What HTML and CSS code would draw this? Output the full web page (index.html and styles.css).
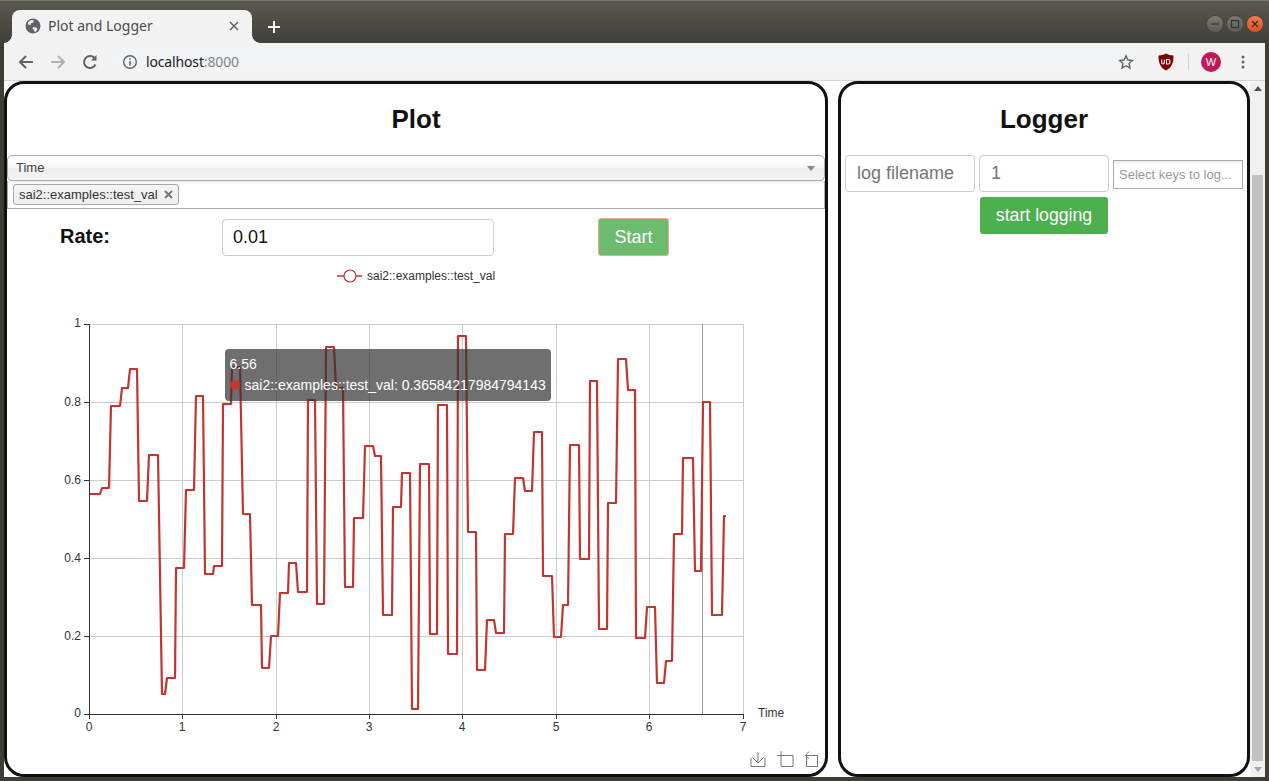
FILE: index.html
```html
<!DOCTYPE html>
<html lang="en">
<head>
    <meta charset="UTF-8">
    <title>Plot and Logger</title>
    <link rel="stylesheet" href="styles.css">
</head>
<body>
<div class="browser">
    <!-- Title bar -->
    <div class="titlebar">
        <div class="tab">
            <svg class="favicon" width="16" height="16" viewBox="0 0 16 16">
                <circle cx="8" cy="8" r="7.5" fill="#5f6368"/>
                <path d="M3 4.5l3-2.5 3 .5-1 2-2 .5-.5 2-2.5-.5zM8 9l3.5.5 1 2-2.5 3-1-2.5-1.500-1z" fill="#f2f2f2"/>
            </svg>
            <span class="tab-title">Plot and Logger</span>
            <svg class="tab-close" width="10" height="10" viewBox="0 0 10 10">
                <path d="M1 1l8 8M9 1l-8 8" stroke="#5f6368" stroke-width="1.500"/>
            </svg>
        </div>
        <svg class="new-tab" width="12" height="12" viewBox="0 0 12 12">
            <path d="M6 0v12M0 6h12" stroke="#f1f1f1" stroke-width="2"/>
        </svg>
        <div class="win-controls">
            <span class="win-btn"><svg width="10" height="10" viewBox="0 0 10 10"><path d="M1 5h8" stroke="#35342f" stroke-width="1.200"/></svg></span>
            <span class="win-btn"><svg width="10" height="10" viewBox="0 0 10 10"><rect x="1.500" y="1.500" width="7" height="7" fill="none" stroke="#35342f" stroke-width="1.200"/></svg></span>
            <span class="win-btn win-close"><svg width="10" height="10" viewBox="0 0 10 10"><path d="M2 2l6 6M8 2l-6 6" stroke="#3c2a20" stroke-width="1.200"/></svg></span>
        </div>
    </div>

    <!-- Toolbar -->
    <div class="toolbar">
        <svg class="tool" width="16" height="16" viewBox="0 0 16 16">
            <path d="M15 8H2M8 2L2 8l6 6" fill="none" stroke="#5f6368" stroke-width="2"/>
        </svg>
        <svg class="tool" width="16" height="16" viewBox="0 0 16 16">
            <path d="M1 8h13M8 2l6 6-6 6" fill="none" stroke="#b0b2b4" stroke-width="2"/>
        </svg>
        <svg class="tool" width="16" height="16" viewBox="0 0 16 16">
            <path d="M13.500 10.500A6 6 0 1 1 12.300 3.800" fill="none" stroke="#5f6368" stroke-width="2"/>
            <path d="M14.500 1v5.500H9z" fill="#5f6368"/>
        </svg>
        <div class="omnibox">
            <svg width="16" height="16" viewBox="0 0 16 16">
                <circle cx="8" cy="8" r="6.300" fill="none" stroke="#5f6368" stroke-width="1.400"/>
                <path d="M8 7v4.500M8 4.200v1.500" stroke="#5f6368" stroke-width="1.500"/>
            </svg>
            <span class="url">localhost<span class="url-port">:8000</span></span>
            <svg class="star" width="16" height="16" viewBox="0 0 16 16">
                <path d="M8 1.800l1.900 4.200 4.500.5-3.400 3 1 4.500L8 11.700 4 14l1-4.500-3.400-3 4.500-.5z" fill="none" stroke="#5f6368" stroke-width="1.400"/>
            </svg>
        </div>
        <svg class="ublock" width="16" height="18" viewBox="0 0 16 18">
            <path d="M8 .5c2 1.300 4.500 2 7.500 2 0 7-1.500 12-7.500 15C2 14.500.5 9.500.5 2.500c3 0 5.500-.7 7.500-2z" fill="#800000"/>
            <path d="M3.700 6.500v3.200c0 1.500 2.600 1.500 2.600 0V6.500M8.500 6.500v4.500h1.800c2.200 0 2.200-4.500 0-4.500z" fill="none" stroke="#f2f2f2" stroke-width="1.100"/>
        </svg>
        <span class="tool-sep"></span>
        <span class="avatar">W</span>
        <svg class="menu" width="4" height="14" viewBox="0 0 4 14">
            <circle cx="2" cy="2" r="1.500" fill="#5f6368"/>
            <circle cx="2" cy="7" r="1.500" fill="#5f6368"/>
            <circle cx="2" cy="12" r="1.500" fill="#5f6368"/>
        </svg>
    </div>

    <div class="viewport">
        <div class="panels">
            <!-- Plot -->
            <div class="panel plot-panel">
                <h1>Plot</h1>
                <div class="chosen-single">
                    <span>Time</span>
                    <i class="chosen-arrow"></i>
                </div>
                <div class="chosen-multi">
                    <span class="chosen-tag">sai2::examples::test_val
                        <svg width="9" height="9" viewBox="0 0 9 9"><path d="M1 1l7 7M8 1L1 8" stroke="#777" stroke-width="2"/></svg>
                    </span>
                </div>
                <div class="rate-row">
                    <label class="rate-label">Rate:</label>
                    <input class="text-input" type="text" value="0.01">
                    <button class="start-btn">Start</button>
                </div>
                <div class="chart">
                    <svg width="818" height="513" viewBox="7 260 818 513">
                        <!-- legend -->
                        <path d="M337 276h25" stroke="#c23531" stroke-width="1.500"/>
                        <circle cx="350" cy="276" r="6" fill="#fff" stroke="#c23531" stroke-width="1.200"/>
                        <text class="chart-text" x="367" y="280">sai2::examples::test_val</text>

                        <!-- grid -->
                        <path class="grid" d="M89.500 324.500H743.500M89.500 402.500H743.500M89.500 480.500H743.500M89.500 558.500H743.500M89.500 636.500H743.500"/>
                        <path class="grid" d="M182.500 324V714M276.500 324V714M369.500 324V714M462.500 324V714M556.500 324V714M649.500 324V714M743.500 324V714"/>
                        <path class="pointer" d="M702.500 324V714"/>

                        <!-- axes -->
                        <path class="axis" d="M89.500 324V714.500H743.500"/>
                        <path class="axis" d="M84 324.500h5M84 402.500h5M84 480.500h5M84 558.500h5M84 636.500h5M84 714.500h5"/>
                        <path class="axis" d="M89.500 714v5M182.500 714v5M276.500 714v5M369.500 714v5M462.500 714v5M556.500 714v5M649.500 714v5M743.500 714v5"/>

                        <g class="chart-text" text-anchor="end">
                            <text x="81" y="327">1</text>
                            <text x="81" y="406">0.8</text>
                            <text x="81" y="484">0.6</text>
                            <text x="81" y="562">0.4</text>
                            <text x="81" y="640">0.2</text>
                            <text x="81" y="717">0</text>
                        </g>
                        <g class="chart-text" text-anchor="middle">
                            <text x="89" y="731">0</text>
                            <text x="182" y="731">1</text>
                            <text x="276" y="731">2</text>
                            <text x="369" y="731">3</text>
                            <text x="462" y="731">4</text>
                            <text x="556" y="731">5</text>
                            <text x="649" y="731">6</text>
                            <text x="743" y="731">7</text>
                        </g>
                        <text class="chart-text" x="758" y="717">Time</text>

                        <!-- test_val series -->
                        <polyline class="series" points="90,494 100,494 102,488 109,488 111,406 120,406 122,388 128,388 130,369 137,369 139,501 147,501 149,455 158,455 162,694 165,694 167,678 175,678 176,568 184,568 186,490 194,490 196,396 203,396 205,574 213,574 214,566 222,566 223,404 231,404 232,367 240,367 243,514 250,514 252,605 261,605 262,668 269,668 271,636 278,636 280,593 288,593 289,563 296,563 298,592 307,592 308,400 315,400 317,604 324,604 326,347 334,347 336,388 343,388 345,587 353,587 354,518 363,518 365,446 373,446 375,456 381,456 383,615 392,615 393,507 401,507 402,473 410,473 412,709 418,709 420,464 429,464 430,634 437,634 438,405 447,405 448,654 457,654 458,336 466,336 468,532 476,532 477,670 485,670 487,620 494,620 496,633 504,633 505,534 513,534 515,478 523,478 525,491 532,491 534,432 542,432 543,576 552,576 554,637 561,637 563,605 568,605 570,445 579,445 580,559 589,559 590,381 597,381 599,629 607,629 608,503 616,503 618,359 626,359 628,390 635,390 636,638 645,638 647,607 655,607 657,683 664,683 666,661 672,661 674,534 682,534 683,458 693,458 695,571 701,571 703,402 710,402 712,615 722,615 724,516 726,516"/>

                        <!-- toolbox -->
                        <g class="toolbox">
                            <path d="M758 752v11M752.500 757.500l5.500 5.500 5.500-5.500M751 758v8.500h14V758"/>
                            <path d="M777 755.500h16v11h-12V751"/>
                            <path d="M806.500 757v9.500h11v-11h-12M809 751.500l-3.500 4 3.500 3"/>
                        </g>
                    </svg>
                    <div class="chart-tooltip">
                        <div>6.56</div>
                        <div><span class="tooltip-dot"></span>sai2::examples::test_val: 0.36584217984794143</div>
                    </div>
                </div>
            </div>

            <!-- Logger -->
            <div class="panel logger-panel">
                <h1>Logger</h1>
                <div class="logger-row">
                    <input class="text-input" type="text" placeholder="log filename">
                    <input class="text-input logger-num" type="text" value="1">
                    <input class="keys-input" type="text" placeholder="Select keys to log...">
                </div>
                <button class="log-btn">start logging</button>
            </div>
        </div>

        <!-- Scrollbar -->
        <div class="scrollbar">
            <i class="arrow-up"></i>
            <div class="thumb"></div>
            <i class="arrow-down"></i>
        </div>
    </div>
</div>
</body>
</html>
```

FILE: styles.css
```css
/* General */
* {
    box-sizing: border-box;
}

body {
    margin: 0;
    overflow: hidden;
    font-family: "Liberation Sans", Arial, sans-serif;
}

.browser {
    display: flex;
    flex-direction: column;
    height: 100vh;
    padding: 0 4px 4px;
    background-color: #3e3d38;
}

/* Title bar */
.titlebar {
    display: flex;
    align-items: flex-end;
    flex-shrink: 0;
    height: 43px;
    margin: 0 -4px;
    padding-left: 12px;
    border-top: 1px solid #77756f;
    background: linear-gradient(#5a5850, #403e39);
}

.tab {
    position: relative;
    display: flex;
    align-items: center;
    width: 240px;
    height: 33px;
    padding: 0 13px 1px;
    border-radius: 8px 8px 0 0;
    background-color: #f2f2f2;
}

.tab::before,
.tab::after {
    content: "";
    position: absolute;
    bottom: 0;
    width: 8px;
    height: 8px;
}

.tab::before {
    left: -8px;
    background: radial-gradient(circle at 0 0, transparent 7.5px, #f2f2f2 8px);
}

.tab::after {
    right: -8px;
    background: radial-gradient(circle at 100% 0, transparent 7.5px, #f2f2f2 8px);
}

.favicon {
    flex-shrink: 0;
}

.tab-title {
    flex: 1;
    margin: -2px 0 0 7px;
    font-family: "Noto Sans", sans-serif;
    font-size: 14px;
    color: #4a4c50;
}

.new-tab {
    margin: 0 0 10px 16px;
}

.win-controls {
    display: flex;
    gap: 4px;
    margin: 0 6px 11px auto;
}

.win-btn {
    display: flex;
    align-items: center;
    justify-content: center;
    width: 16px;
    height: 16px;
    border-radius: 50%;
    background: linear-gradient(#7a7972, #5c5b55);
    box-shadow: 0 0 0 1px #45443f;
}

.win-close {
    background: linear-gradient(#f08050, #dc4f1e);
}

/* Toolbar */
.toolbar {
    display: flex;
    align-items: center;
    flex-shrink: 0;
    height: 38px;
    padding-left: 14px;
    border-bottom: 1px solid #d5d5d5;
    background-color: #f2f2f2;
}

.tool {
    margin-right: 16px;
}

.omnibox {
    display: flex;
    align-items: center;
    width: 1031px;
    height: 30px;
    margin-left: -2px;
    padding: 0 9px 0 10px;
    border-radius: 15px;
    background-color: #f1f3f4;
}

.url {
    margin-left: 8px;
    font-family: "Noto Sans", sans-serif;
    font-size: 14px;
    letter-spacing: -0.15px;
    color: #202124;
}

.url-port {
    color: #80868b;
}

.star {
    margin-left: auto;
}

.ublock {
    margin-left: 15px;
}

.tool-sep {
    width: 1px;
    height: 16px;
    margin-left: 14px;
    background-color: #d0d0d0;
}

.avatar {
    display: flex;
    align-items: center;
    justify-content: center;
    width: 20px;
    height: 20px;
    margin-left: 12px;
    border-radius: 50%;
    background-color: #c2185b;
    font-size: 11px;
    color: white;
}

.menu {
    margin-left: 20px;
}

/* Page */
.viewport {
    display: flex;
    flex: 1;
    min-height: 0;
    background-color: white;
}

.panels {
    display: flex;
    flex: 1;
    gap: 10px;
}

.panel {
    border: 3px solid #111;
    border-radius: 20px;
    background-color: white;
}

.plot-panel {
    width: 824px;
}

.logger-panel {
    width: 412px;
}

.panel h1 {
    margin: 21px 0;
    font-size: 26px;
    line-height: 29px;
    text-align: center;
    color: #111;
}

/* Chosen style selects */
.chosen-single {
    display: flex;
    align-items: center;
    justify-content: space-between;
    height: 26px;
    padding: 0 9px 2px 8px;
    border: 1px solid #aaa;
    border-radius: 5px;
    background: linear-gradient(#fff 20%, #f6f6f6 50%, #eee 52%, #f4f4f4);
    box-shadow: 0 1px 1px rgba(0, 0, 0, 0.1);
    font-size: 13px;
    color: #444;
}

.chosen-arrow {
    margin-top: 2px;
    border-top: 5px solid #888;
    border-left: 4px solid transparent;
    border-right: 4px solid transparent;
}

.chosen-multi {
    display: flex;
    align-items: center;
    height: 28px;
    padding: 0 5px;
    border: 1px solid #aaa;
    border-top: none;
    background: linear-gradient(#eee 1%, #fff 15%);
}

.chosen-tag {
    display: flex;
    align-items: center;
    gap: 6px;
    height: 21px;
    padding: 0 5px;
    border: 1px solid #aaa;
    border-radius: 3px;
    background: linear-gradient(#f4f4f4, #eee);
    font-size: 13px;
    color: #333;
}

/* Rate row */
.rate-row {
    display: flex;
    align-items: flex-start;
    padding-top: 10px;
}

.rate-label {
    width: 215px;
    padding: 6px 0 0 53px;
    font-size: 20px;
    font-weight: bold;
    color: #111;
}

.text-input {
    height: 37px;
    padding: 0 10px;
    border: 1px solid #ccc;
    border-radius: 4px;
    font-family: inherit;
    font-size: 18px;
    color: #111;
}

.text-input::placeholder {
    color: #757575;
}

.rate-row .text-input {
    width: 272px;
}

.start-btn {
    width: 71px;
    height: 38px;
    margin: -1px 0 0 104px;
    border: 1px solid #efa987;
    border-radius: 3px;
    background-color: #6cbb6f;
    font-family: inherit;
    font-size: 18px;
    color: white;
}

/* Chart */
.chart {
    position: relative;
    margin-top: 4px;
}

.chart svg {
    display: block;
}

.chart-text {
    font-size: 12px;
    fill: #333;
}

.grid {
    fill: none;
    stroke: #ccc;
}

.pointer {
    stroke: #999;
}

.axis {
    fill: none;
    stroke: #333;
}

.series {
    fill: none;
    stroke: #c23531;
    stroke-width: 2.2;
    stroke-linejoin: round;
}

.toolbox path {
    fill: none;
    stroke: #777;
}

.chart-tooltip {
    position: absolute;
    top: 89px;
    left: 217.5px;
    padding: 5px 5.5px 5px 5px;
    border-radius: 4px;
    background-color: rgba(50, 50, 50, 0.7);
    font-size: 14px;
    line-height: 21px;
    white-space: nowrap;
    color: white;
}

.tooltip-dot {
    display: inline-block;
    width: 10px;
    height: 10px;
    margin-right: 5px;
    border-radius: 50%;
    background-color: #c23531;
}

/* Logger */
.logger-row {
    display: flex;
    align-items: flex-start;
    gap: 4px;
    padding: 0 4px;
}

.logger-row .text-input {
    width: 130px;
    padding-left: 11px;
}

.logger-num {
    color: #757575;
}

.keys-input {
    width: 130px;
    height: 29px;
    margin-top: 5px;
    padding: 0 5px;
    border: 1px solid #aaa;
    background: linear-gradient(#eee 1%, #fff 15%);
    font-family: inherit;
    font-size: 13px;
}

.keys-input::placeholder {
    color: #999;
}

.log-btn {
    display: block;
    width: 128px;
    height: 37px;
    margin: 5px 0 0 139px;
    border: none;
    border-radius: 3px;
    background-color: #4caf50;
    font-family: inherit;
    font-size: 17.7px;
    color: white;
}

/* Scrollbar */
.scrollbar {
    display: flex;
    flex-direction: column;
    align-items: center;
    width: 15px;
    background-color: #f1f1f1;
}

.arrow-up {
    margin-top: 5px;
    border-bottom: 5px solid #505050;
    border-left: 4px solid transparent;
    border-right: 4px solid transparent;
}

.thumb {
    width: 11px;
    height: 586px;
    margin-top: 84px;
    background-color: #c1c1c1;
}

.arrow-down {
    margin-top: auto;
    margin-bottom: 5px;
    border-top: 5px solid #a3a3a3;
    border-left: 4px solid transparent;
    border-right: 4px solid transparent;
}
```
